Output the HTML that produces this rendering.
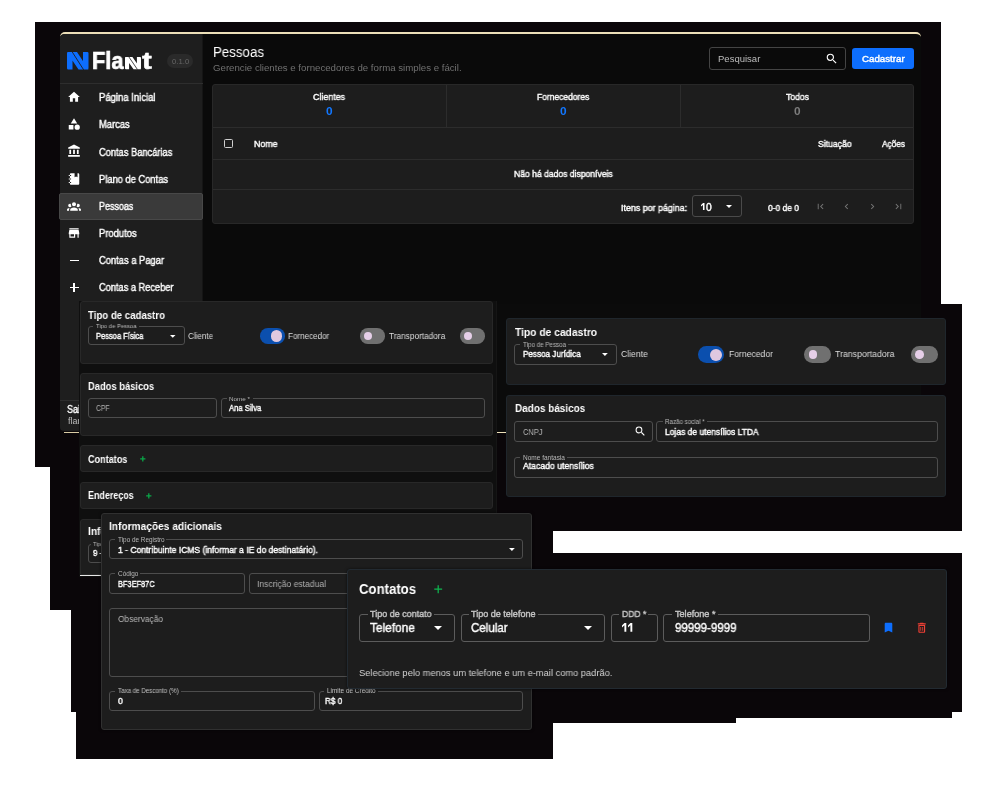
<!DOCTYPE html>
<html><head><meta charset="utf-8">
<style>
*{box-sizing:border-box;margin:0;padding:0}
html,body{width:1000px;height:800px;background:#fff;overflow:hidden}
body{font-family:"Liberation Sans",sans-serif;color:#fff;position:relative}
.t{position:absolute;white-space:nowrap;line-height:1;transform-origin:0 0;display:block;will-change:transform}
svg{position:absolute;overflow:visible}
</style></head><body>
<div style="position:absolute;left:35.1px;top:22.1px;width:905.7px;height:444.7px;background:#0a0609;"></div>
<div style="position:absolute;left:50.1px;top:460px;width:502.8px;height:149.7px;background:#0a0609;"></div>
<div style="position:absolute;left:71.1px;top:600px;width:481.8px;height:111.6px;background:#0a0609;"></div>
<div style="position:absolute;left:76.2px;top:700px;width:476.7px;height:58.8px;background:#0a0609;"></div>
<div style="position:absolute;left:500px;top:304px;width:462px;height:227px;background:#0a0609;"></div>
<div style="position:absolute;left:500px;top:520px;width:52.9px;height:40px;background:#0a0609;"></div>
<div style="position:absolute;left:550px;top:553.1px;width:412px;height:158.5px;background:#0a0609;"></div>
<div style="position:absolute;left:550px;top:700px;width:402px;height:17.7px;background:#0a0609;"></div>
<div style="position:absolute;left:550px;top:700px;width:186px;height:22.8px;background:#0a0609;"></div>
<div style="position:absolute;left:60px;top:31.9px;width:860.5px;height:399px;background:#0a0a0a;border-radius:5px 5px 0 4px;border-top:2.4px solid #ecdfb8;overflow:hidden">
<div style="position:absolute;left:0;top:0;width:143px;height:399px;background:#1e1e1e;border-right:1px solid #151515"></div>
</div>
<div style="position:absolute;left:64px;top:432px;width:854px;height:1.1px;background:#d9cba4;"></div>
<div style="position:absolute;left:60px;top:83.2px;width:143px;height:1px;background:#2e2e2e;"></div>
<div style="position:absolute;left:60px;top:399.5px;width:143px;height:1px;background:#2e2e2e;"></div>
<svg style="left:67px;top:52px" width="21.5" height="17.5" viewBox="0 0 215 175" preserveAspectRatio="none"><path d="M0 12Q0 0 12 0H55V175H12Q0 175 0 163ZM160 0H203Q215 0 215 12V163Q215 175 203 175H160ZM8 0H100L215 175H115L0 4Z" fill="#0d6efd"/><path d="M50 -4L167 179" stroke="#1e1e1e" stroke-width="9"/></svg>
<span class="t" style="left:92.00px;top:50.00px;font-size:23px;font-weight:700;color:#fff;-webkit-text-stroke:0.7px #fff;transform:scaleX(0.9478)">Fla</span>
<svg style="left:125px;top:57px" width="16" height="12.2" viewBox="0 0 215 175" preserveAspectRatio="none"><path d="M0 12Q0 0 12 0H55V175H12Q0 175 0 163ZM160 0H203Q215 0 215 12V163Q215 175 203 175H160ZM8 0H100L215 175H115L0 4Z" fill="#fff"/><path d="M50 -4L167 179" stroke="#1e1e1e" stroke-width="11"/></svg>
<span class="t" style="left:142.30px;top:50.00px;font-size:23px;font-weight:700;color:#fff;-webkit-text-stroke:0.5px #fff;transform:scaleX(1.2774)">t</span>
<div style="position:absolute;left:167px;top:54px;width:26.4px;height:14.4px;background:#2a2a2a;border-radius:7.2px;"></div>
<span class="t" style="left:171.60px;top:58.00px;font-size:7.5px;font-weight:400;color:#666;transform:scaleX(1.0307)">0.1.0</span>
<div style="position:absolute;left:59px;top:193px;width:144px;height:26.5px;background:#3a3a3a;border:1px solid #484848;border-radius:2px;"></div>
<span class="t" style="left:99.00px;top:93.00px;font-size:10px;font-weight:400;color:#fff;-webkit-text-stroke:0.4px #fff;transform:scaleX(0.9498)">Página Inicial</span>
<svg style="left:67px;top:90.1px" width="14" height="14" viewBox="0 0 24 24"><path d="M10 20v-6h4v6h5v-8h3L12 3 2 12h3v8z" fill="#fff"/></svg>
<span class="t" style="left:99.00px;top:120.00px;font-size:10px;font-weight:400;color:#fff;-webkit-text-stroke:0.4px #fff;transform:scaleX(0.9361)">Marcas</span>
<svg style="left:67px;top:117.24999999999999px" width="14" height="14" viewBox="0 0 24 24"><path d="M12 2l-5.5 9h11zM17.5 13a4.5 4.5 0 1 0 0 9 4.5 4.5 0 0 0 0-9zM3 21.5h8v-8H3z" fill="#fff"/></svg>
<span class="t" style="left:99.00px;top:148.00px;font-size:10px;font-weight:400;color:#fff;-webkit-text-stroke:0.4px #fff;transform:scaleX(0.9286)">Contas Bancárias</span>
<svg style="left:67px;top:144.4px" width="14" height="14" viewBox="0 0 24 24"><path d="M4 10h3v7H4zM10.5 10h3v7h-3zM2 19h20v3H2zM17 10h3v7h-3zM12 1L2 6v2h20V6z" fill="#fff"/></svg>
<span class="t" style="left:99.00px;top:175.00px;font-size:10px;font-weight:400;color:#fff;-webkit-text-stroke:0.4px #fff;transform:scaleX(0.9330)">Plano de Contas</span>
<svg style="left:67px;top:171.54999999999998px" width="14" height="14" viewBox="0 0 24 24"><path d="M3,7V5H5V4C5,2.89 5.9,2 7,2H13V9L15.5,7.5L18,9V2H19C20.05,2 21,2.95 21,4V20C21,21.05 20.05,22 19,22H7C5.95,22 5,21.05 5,20V19H3V17H5V13H3V11H5V7H3M7,11H5V13H7V11M7,7V5H5V7H7M7,19V17H5V19H7Z" fill="#fff"/></svg>
<span class="t" style="left:99.00px;top:202.00px;font-size:10px;font-weight:400;color:#fff;-webkit-text-stroke:0.4px #fff;transform:scaleX(0.8968)">Pessoas</span>
<svg style="left:67px;top:198.70000000000002px" width="14" height="14" viewBox="0 0 24 24"><path d="M12,5.5A3.5,3.5 0 0,1 15.5,9A3.5,3.5 0 0,1 12,12.5A3.5,3.5 0 0,1 8.5,9A3.5,3.5 0 0,1 12,5.5M5,8C5.56,8 6.08,8.15 6.53,8.42C6.38,9.85 6.8,11.27 7.66,12.38C7.16,13.34 6.16,14 5,14A3,3 0 0,1 2,11A3,3 0 0,1 5,8M19,8A3,3 0 0,1 22,11A3,3 0 0,1 19,14C17.84,14 16.84,13.34 16.34,12.38C17.2,11.27 17.62,9.85 17.47,8.42C17.92,8.15 18.44,8 19,8M5.5,18.25C5.5,16.18 8.41,14.5 12,14.5C15.59,14.5 18.5,16.18 18.5,18.25V20H5.5V18.25M0,20V18.5C0,17.11 1.89,15.94 4.45,15.6C3.86,16.28 3.5,17.22 3.5,18.25V20H0M24,20H20.5V18.25C20.5,17.22 20.14,16.28 19.55,15.6C22.11,15.94 24,17.11 24,18.5V20Z" fill="#fff"/></svg>
<span class="t" style="left:99.00px;top:229.00px;font-size:10px;font-weight:400;color:#fff;-webkit-text-stroke:0.4px #fff;transform:scaleX(0.9418)">Produtos</span>
<svg style="left:67px;top:225.85px" width="14" height="14" viewBox="0 0 24 24"><path d="M20 4H4v2h16V4zm1 10v-2l-1-5H4l-1 5v2h1v6h10v-6h4v6h2v-6h1zm-9 4H6v-4h6v4z" fill="#fff"/></svg>
<span class="t" style="left:99.00px;top:256.00px;font-size:10px;font-weight:400;color:#fff;-webkit-text-stroke:0.4px #fff;transform:scaleX(0.9353)">Contas a Pagar</span>
<div style="position:absolute;left:69.5px;top:259.5px;width:9px;height:1.4px;background:#fff;"></div>
<span class="t" style="left:99.00px;top:283.00px;font-size:10px;font-weight:400;color:#fff;-webkit-text-stroke:0.4px #fff;transform:scaleX(0.9242)">Contas a Receber</span>
<div style="position:absolute;left:69.5px;top:286.65000000000003px;width:9px;height:1.4px;background:#fff;"></div>
<div style="position:absolute;left:73.3px;top:282.85px;width:1.4px;height:9px;background:#fff;"></div>
<span class="t" style="left:67.00px;top:405.00px;font-size:10px;font-weight:400;color:#fff;-webkit-text-stroke:0.4px #fff;transform:scaleX(0.8990)">Sair</span>
<span class="t" style="left:67.50px;top:417.00px;font-size:9px;font-weight:400;color:#bbb;transform:scaleX(0.9893)">flant@flant.com</span>
<span class="t" style="left:212.60px;top:45.00px;font-size:14px;font-weight:400;color:#fff;transform:scaleX(0.9497)">Pessoas</span>
<span class="t" style="left:212.60px;top:63.00px;font-size:9.6px;font-weight:400;color:#707070;transform:scaleX(1.0069)">Gerencie clientes e fornecedores de forma simples e fácil.</span>
<div style="position:absolute;left:709px;top:46.8px;width:136.6px;height:23.4px;border:1px solid #444;border-radius:3px;"></div>
<span class="t" style="left:718.00px;top:54.00px;font-size:9.5px;font-weight:400;color:#bdbdbd;transform:scaleX(1.0012)">Pesquisar</span>
<svg style="left:824.5px;top:52.3px" width="13.5" height="13.5" viewBox="0 0 24 24"><path d="M15.5 14h-.79l-.28-.27A6.471 6.471 0 0 0 16 9.5 6.5 6.5 0 1 0 9.5 16c1.61 0 3.09-.59 4.23-1.57l.27.28v.79l5 4.99L20.49 19l-4.99-5zm-6 0C7.01 14 5 11.99 5 9.5S7.01 5 9.5 5 14 7.01 14 9.5 11.99 14 9.5 14z" fill="#fff"/></svg>
<div style="position:absolute;left:852.3px;top:48.4px;width:61.9px;height:20.2px;background:#0d6efd;border-radius:3px;"></div>
<span class="t" style="left:861.60px;top:55.00px;font-size:9px;font-weight:400;color:#fff;-webkit-text-stroke:0.4px #fff;transform:scaleX(1.0806)">Cadastrar</span>
<div style="position:absolute;left:212px;top:83.8px;width:702px;height:140.0px;background:#1d1d1d;border:1px solid #282828;border-radius:3px;"></div>
<div style="position:absolute;left:213px;top:127px;width:700px;height:1px;background:#2c2c2c;"></div>
<div style="position:absolute;left:213px;top:158.8px;width:700px;height:1px;background:#2c2c2c;"></div>
<div style="position:absolute;left:213px;top:188.5px;width:700px;height:1px;background:#2c2c2c;"></div>
<div style="position:absolute;left:446px;top:84.8px;width:1px;height:42.2px;background:#2c2c2c;"></div>
<div style="position:absolute;left:680px;top:84.8px;width:1px;height:42.2px;background:#2c2c2c;"></div>
<span class="t" style="left:313.00px;top:93.00px;font-size:9px;font-weight:400;color:#fff;-webkit-text-stroke:0.4px #fff;transform:scaleX(0.9841)">Clientes</span>
<span class="t" style="left:325.70px;top:106.00px;font-size:11px;font-weight:700;color:#1277ff;transform:scaleX(1.0776)">0</span>
<span class="t" style="left:536.85px;top:93.00px;font-size:9px;font-weight:400;color:#fff;-webkit-text-stroke:0.4px #fff;transform:scaleX(0.9418)">Fornecedores</span>
<span class="t" style="left:559.70px;top:106.00px;font-size:11px;font-weight:700;color:#1277ff;transform:scaleX(1.0776)">0</span>
<span class="t" style="left:785.50px;top:93.00px;font-size:9px;font-weight:400;color:#fff;-webkit-text-stroke:0.4px #fff;transform:scaleX(0.9571)">Todos</span>
<span class="t" style="left:793.70px;top:106.00px;font-size:11px;font-weight:700;color:#7c7c7c;transform:scaleX(1.0776)">0</span>
<div style="position:absolute;left:223.8px;top:138.6px;width:9.2px;height:9.2px;border:1.2px solid #d0d0d0;border-radius:1.5px;"></div>
<span class="t" style="left:253.80px;top:140.00px;font-size:9px;font-weight:400;color:#fff;-webkit-text-stroke:0.4px #fff;transform:scaleX(0.9785)">Nome</span>
<span class="t" style="left:817.80px;top:140.00px;font-size:9px;font-weight:400;color:#fff;-webkit-text-stroke:0.4px #fff;transform:scaleX(0.9591)">Situação</span>
<span class="t" style="left:881.70px;top:140.00px;font-size:9px;font-weight:400;color:#fff;-webkit-text-stroke:0.4px #fff;transform:scaleX(0.9194)">Ações</span>
<span class="t" style="left:513.60px;top:170.00px;font-size:9px;font-weight:400;color:#fff;-webkit-text-stroke:0.4px #fff;transform:scaleX(0.9539)">Não há dados disponíveis</span>
<span class="t" style="left:620.80px;top:204.00px;font-size:9px;font-weight:400;color:#fff;-webkit-text-stroke:0.4px #fff;transform:scaleX(0.9871)">Itens por página:</span>
<div style="position:absolute;left:691.8px;top:195px;width:50.6px;height:22.4px;border:1px solid #4a4a4a;border-radius:3px;"></div>
<svg style="left:701px;top:203.4px" width="3.5" height="7.1" viewBox="0 0 10 20" preserveAspectRatio="none"><path d="M0 5.600L5.800 0H10V20H5.600V5.400L0 10.200Z" fill="#fff"/></svg>
<span class="t" style="left:706.00px;top:203.00px;font-size:10px;font-weight:400;color:#fff;-webkit-text-stroke:0.4px #fff;transform:scaleX(1.0247)">0</span>
<svg style="left:726.0px;top:205.3px" width="6" height="3.0" viewBox="0 0 10 5"><path d="M0 0h10L5 5z" fill="#fff"/></svg>
<span class="t" style="left:768.00px;top:204.00px;font-size:9px;font-weight:400;color:#fff;-webkit-text-stroke:0.4px #fff;transform:scaleX(0.9385)">0-0 de 0</span>
<svg style="left:815.3px;top:201.2px" width="11" height="11" viewBox="0 0 24 24"><path d="M18.41 16.59L13.82 12l4.59-4.59L17 6l-6 6 6 6zM6 6h2v12H6z" fill="#777"/></svg>
<svg style="left:840.9px;top:201.2px" width="11" height="11" viewBox="0 0 24 24"><path d="M15.41 7.41L14 6l-6 6 6 6 1.41-1.41L10.830 12z" fill="#777"/></svg>
<svg style="left:866.8px;top:201.2px" width="11" height="11" viewBox="0 0 24 24"><path d="M10 6L8.590 7.410 13.170 12l-4.580 4.590L10 18l6-6z" fill="#777"/></svg>
<svg style="left:892.7px;top:201.2px" width="11" height="11" viewBox="0 0 24 24"><path d="M5.59 7.41L10.18 12l-4.59 4.59L7 18l6-6-6-6zM16 6h2v12h-2z" fill="#777"/></svg>
<div style="position:absolute;left:79px;top:301px;width:417px;height:275.5px;background:#0f0f0f;"></div>
<div style="position:absolute;left:495.5px;top:301px;width:1.2px;height:212px;background:#151515;"></div>
<div style="position:absolute;left:80px;top:301.3px;width:412.8px;height:62.5px;background:#1d1d1d;border:1px solid #282828;border-radius:3px;"></div>
<span class="t" style="left:88.00px;top:310.00px;font-size:10.5px;font-weight:700;color:#fff;transform:scaleX(0.9185)">Tipo de cadastro</span>
<div style="position:absolute;left:87.8px;top:326px;width:96.8px;height:19.4px;border:1px solid #4d4d4d;border-radius:3px;"></div>
<div style="position:absolute;left:93.2px;top:324.3px;width:45.5px;height:4px;background:#1d1d1d;"></div>
<span class="t" style="left:95.70px;top:323.00px;font-size:6px;font-weight:400;color:#b9b9b9;transform:scaleX(0.9763)">Tipo de Pessoa</span>
<span class="t" style="left:95.70px;top:332.00px;font-size:8.6px;font-weight:400;color:#fff;-webkit-text-stroke:0.4px #fff;transform:scaleX(0.8762)">Pessoa Física</span>
<svg style="left:169.65px;top:335.025px" width="5.5" height="2.75" viewBox="0 0 10 5"><path d="M0 0h10L5 5z" fill="#fff"/></svg>
<span class="t" style="left:188.00px;top:332.00px;font-size:8.6px;font-weight:400;color:#dedede;transform:scaleX(0.9415)">Cliente</span>
<div style="position:absolute;left:259.5px;top:328.3px;width:25.0px;height:15.699999999999989px;background:#0b4fae;border-radius:7.849999999999994px;"></div>
<div style="position:absolute;left:270.99800000000005px;top:330.498px;width:11.303999999999991px;height:11.303999999999991px;background:#dfc8e0;border-radius:50%;"></div>
<span class="t" style="left:288.30px;top:332.00px;font-size:8.6px;font-weight:400;color:#dedede;transform:scaleX(0.9374)">Fornecedor</span>
<div style="position:absolute;left:359.9px;top:328.3px;width:24.80000000000001px;height:15.699999999999989px;background:#707070;border-radius:7.849999999999994px;"></div>
<div style="position:absolute;left:364.16799999999995px;top:332.068px;width:8.163999999999994px;height:8.163999999999994px;background:#e6cfe8;border-radius:50%;"></div>
<span class="t" style="left:388.50px;top:332.00px;font-size:8.6px;font-weight:400;color:#dedede;transform:scaleX(0.9617)">Transportadora</span>
<div style="position:absolute;left:459.6px;top:328.3px;width:25.19999999999999px;height:15.699999999999989px;background:#707070;border-radius:7.849999999999994px;"></div>
<div style="position:absolute;left:463.868px;top:332.068px;width:8.163999999999994px;height:8.163999999999994px;background:#e6cfe8;border-radius:50%;"></div>
<div style="position:absolute;left:80px;top:373.4px;width:412.8px;height:62.2px;background:#1d1d1d;border:1px solid #282828;border-radius:3px;"></div>
<span class="t" style="left:88.00px;top:381.00px;font-size:10.5px;font-weight:700;color:#fff;transform:scaleX(0.8931)">Dados básicos</span>
<div style="position:absolute;left:87.8px;top:398.2px;width:129.6px;height:19.6px;border:1px solid #4d4d4d;border-radius:3px;"></div>
<span class="t" style="left:95.70px;top:404.00px;font-size:8.6px;font-weight:400;color:#b4b4b4;transform:scaleX(0.7855)">CPF</span>
<div style="position:absolute;left:221.3px;top:398.2px;width:263.5px;height:19.6px;border:1px solid #4d4d4d;border-radius:3px;"></div>
<div style="position:absolute;left:226.5px;top:396.5px;width:26px;height:4px;background:#1d1d1d;"></div>
<span class="t" style="left:229.00px;top:396.00px;font-size:6px;font-weight:400;color:#b9b9b9;transform:scaleX(1.0492)">Nome *</span>
<span class="t" style="left:229.00px;top:404.00px;font-size:8.6px;font-weight:400;color:#fff;-webkit-text-stroke:0.4px #fff;transform:scaleX(0.8895)">Ana Silva</span>
<div style="position:absolute;left:80px;top:445.1px;width:412.8px;height:27.2px;background:#1d1d1d;border:1px solid #282828;border-radius:3px;"></div>
<span class="t" style="left:87.80px;top:455.00px;font-size:10px;font-weight:700;color:#fff;transform:scaleX(0.9090)">Contatos</span>
<svg style="left:139.7px;top:455.8px" width="5.6" height="5.6" viewBox="0 0 10 10"><path d="M5 0.3V9.7M0.3 5H9.7" stroke="#0aa648" stroke-width="2.3214285714285716" fill="none"/></svg>
<div style="position:absolute;left:80px;top:482.3px;width:412.8px;height:27.2px;background:#1d1d1d;border:1px solid #282828;border-radius:3px;"></div>
<span class="t" style="left:87.80px;top:491.00px;font-size:10px;font-weight:700;color:#fff;transform:scaleX(0.8936)">Endereços</span>
<svg style="left:146.0px;top:492.59999999999997px" width="5.6" height="5.6" viewBox="0 0 10 10"><path d="M5 0.3V9.7M0.3 5H9.7" stroke="#0aa648" stroke-width="2.3214285714285716" fill="none"/></svg>
<div style="position:absolute;left:80px;top:519.4px;width:412.8px;height:55.8px;background:#1d1d1d;border:1px solid #282828;border-radius:3px;border-radius:3px 3px 0 0;"></div>
<div style="position:absolute;left:80px;top:575px;width:21px;height:1.2px;background:#e8e8e8;"></div>
<span class="t" style="left:87.80px;top:526.00px;font-size:10.5px;font-weight:700;color:#fff;transform:scaleX(0.9681)">Informações adicionais</span>
<div style="position:absolute;left:87.8px;top:543.5px;width:397.0px;height:19.5px;border:1px solid #4d4d4d;border-radius:3px;"></div>
<div style="position:absolute;left:90.5px;top:541.7px;width:45px;height:4px;background:#1d1d1d;"></div>
<span class="t" style="left:93.00px;top:541.00px;font-size:6px;font-weight:400;color:#b9b9b9;transform:scaleX(0.9130)">Tipo de Registro</span>
<span class="t" style="left:93.00px;top:549.00px;font-size:8.6px;font-weight:400;color:#fff;-webkit-text-stroke:0.4px #fff;transform:scaleX(0.9100)">9 - Não Contribuinte</span>
<div style="position:absolute;left:497px;top:304px;width:465px;height:227px;background:#0a0609;"></div>
<div style="position:absolute;left:497px;top:304px;width:424px;height:128.5px;background:#0b0b0b;"></div>
<div style="position:absolute;left:497px;top:432px;width:9px;height:1.1px;background:#ecdfb8;"></div>
<div style="position:absolute;left:506px;top:318.2px;width:440.3px;height:66.4px;background:#1d1d1d;border:1px solid #282828;border-radius:3px;border-color:#1f262c;"></div>
<span class="t" style="left:514.70px;top:327.00px;font-size:11.2px;font-weight:700;color:#fff;transform:scaleX(0.9180)">Tipo de cadastro</span>
<div style="position:absolute;left:514.3px;top:344.2px;width:102.8px;height:20.6px;border:1px solid #4d4d4d;border-radius:3px;"></div>
<div style="position:absolute;left:520.1px;top:342.7px;width:48.2px;height:4px;background:#1d1d1d;"></div>
<span class="t" style="left:522.60px;top:342.00px;font-size:6.4px;font-weight:400;color:#b9b9b9;transform:scaleX(0.9780)">Tipo de Pessoa</span>
<span class="t" style="left:522.60px;top:350.00px;font-size:9.1px;font-weight:400;color:#fff;-webkit-text-stroke:0.4px #fff;transform:scaleX(0.8918)">Pessoa Jurídica</span>
<svg style="left:602.1px;top:353.15000000000003px" width="5.8" height="2.9" viewBox="0 0 10 5"><path d="M0 0h10L5 5z" fill="#fff"/></svg>
<span class="t" style="left:621.20px;top:350.00px;font-size:9.1px;font-weight:400;color:#dedede;transform:scaleX(0.9466)">Cliente</span>
<div style="position:absolute;left:697.7px;top:346.4px;width:26.5px;height:16.600000000000023px;background:#0b4fae;border-radius:8.300000000000011px;"></div>
<div style="position:absolute;left:709.9240000000001px;top:348.724px;width:11.952000000000016px;height:11.952000000000016px;background:#dfc8e0;border-radius:50%;"></div>
<span class="t" style="left:728.50px;top:350.00px;font-size:9.1px;font-weight:400;color:#dedede;transform:scaleX(0.9459)">Fornecedor</span>
<div style="position:absolute;left:804.2px;top:346.4px;width:26.59999999999991px;height:16.600000000000023px;background:#707070;border-radius:8.300000000000011px;"></div>
<div style="position:absolute;left:808.6840000000001px;top:350.38399999999996px;width:8.632000000000012px;height:8.632000000000012px;background:#e6cfe8;border-radius:50%;"></div>
<span class="t" style="left:835.00px;top:350.00px;font-size:9.1px;font-weight:400;color:#dedede;transform:scaleX(0.9621)">Transportadora</span>
<div style="position:absolute;left:911px;top:346.4px;width:26.600000000000023px;height:16.600000000000023px;background:#707070;border-radius:8.300000000000011px;"></div>
<div style="position:absolute;left:915.484px;top:350.38399999999996px;width:8.632000000000012px;height:8.632000000000012px;background:#e6cfe8;border-radius:50%;"></div>
<div style="position:absolute;left:506px;top:394.6px;width:440.3px;height:102.4px;background:#1d1d1d;border:1px solid #282828;border-radius:3px;border-color:#1f262c;"></div>
<span class="t" style="left:514.70px;top:403.00px;font-size:11.2px;font-weight:700;color:#fff;transform:scaleX(0.8890)">Dados básicos</span>
<div style="position:absolute;left:514.3px;top:421.2px;width:138.7px;height:20.4px;border:1px solid #4d4d4d;border-radius:3px;"></div>
<span class="t" style="left:522.60px;top:428.00px;font-size:9.1px;font-weight:400;color:#b4b4b4;transform:scaleX(0.8168)">CNPJ</span>
<svg style="left:634px;top:425.3px" width="12.6" height="12.6" viewBox="0 0 24 24"><path d="M15.5 14h-.79l-.28-.27A6.471 6.471 0 0 0 16 9.5 6.5 6.5 0 1 0 9.5 16c1.61 0 3.09-.59 4.23-1.57l.27.28v.79l5 4.99L20.49 19l-4.99-5zm-6 0C7.01 14 5 11.99 5 9.5S7.01 5 9.5 5 14 7.01 14 9.5 11.99 14 9.5 14z" fill="#fff"/></svg>
<div style="position:absolute;left:656.3px;top:421.2px;width:281.3px;height:20.4px;border:1px solid #4d4d4d;border-radius:3px;"></div>
<div style="position:absolute;left:662.5px;top:419.4px;width:44.7px;height:4px;background:#1d1d1d;"></div>
<span class="t" style="left:665.00px;top:419.00px;font-size:6.4px;font-weight:400;color:#b9b9b9;transform:scaleX(0.9716)">Razão social *</span>
<span class="t" style="left:665.00px;top:428.00px;font-size:9.1px;font-weight:400;color:#fff;-webkit-text-stroke:0.4px #fff;transform:scaleX(0.9331)">Lojas de utensílios LTDA</span>
<div style="position:absolute;left:514.3px;top:457.3px;width:423.3px;height:20.3px;border:1px solid #4d4d4d;border-radius:3px;"></div>
<div style="position:absolute;left:520.1px;top:455.5px;width:47px;height:4px;background:#1d1d1d;"></div>
<span class="t" style="left:522.60px;top:455.00px;font-size:6.4px;font-weight:400;color:#b9b9b9;transform:scaleX(1.0190)">Nome fantasia</span>
<span class="t" style="left:522.60px;top:462.00px;font-size:9.1px;font-weight:400;color:#fff;-webkit-text-stroke:0.4px #fff;transform:scaleX(0.9525)">Atacado utensílios</span>
<div style="position:absolute;left:101px;top:513px;width:431.3px;height:217.2px;background:#1d1d1d;border:1px solid #282828;border-radius:3px;border-color:#303030;box-shadow:0 0 3px rgba(0,0,0,.6);"></div>
<span class="t" style="left:109.40px;top:521.00px;font-size:11.2px;font-weight:700;color:#fff;transform:scaleX(0.9087)">Informações adicionais</span>
<div style="position:absolute;left:109.2px;top:539.1px;width:414.1px;height:20.2px;border:1px solid #4d4d4d;border-radius:3px;"></div>
<div style="position:absolute;left:115.1px;top:537.4px;width:51.2px;height:4px;background:#1d1d1d;"></div>
<span class="t" style="left:117.60px;top:537.00px;font-size:6.4px;font-weight:400;color:#b9b9b9;transform:scaleX(0.9902)">Tipo de Registro</span>
<span class="t" style="left:117.60px;top:546.00px;font-size:9.1px;font-weight:400;color:#fff;-webkit-text-stroke:0.4px #fff;transform:scaleX(0.9399)">1 - Contribuinte ICMS (informar a IE do destinatário).</span>
<svg style="left:509.1px;top:548.05px" width="5.8" height="2.9" viewBox="0 0 10 5"><path d="M0 0h10L5 5z" fill="#fff"/></svg>
<div style="position:absolute;left:109.2px;top:573.25px;width:135.8px;height:20.5px;border:1px solid #4d4d4d;border-radius:3px;"></div>
<div style="position:absolute;left:115.1px;top:571.7px;width:25.4px;height:4px;background:#1d1d1d;"></div>
<span class="t" style="left:117.60px;top:571.00px;font-size:6.4px;font-weight:400;color:#b9b9b9;transform:scaleX(1.0066)">Código</span>
<span class="t" style="left:117.60px;top:580.00px;font-size:9.1px;font-weight:400;color:#fff;-webkit-text-stroke:0.4px #fff;transform:scaleX(0.8136)">BF3EF87C</span>
<div style="position:absolute;left:249px;top:573.25px;width:274.3px;height:20.5px;border:1px solid #4d4d4d;border-radius:3px;"></div>
<span class="t" style="left:257.00px;top:580.00px;font-size:9.1px;font-weight:400;color:#b0b0b0;transform:scaleX(0.9414)">Inscrição estadual</span>
<div style="position:absolute;left:109.2px;top:608.25px;width:414.1px;height:68.5px;border:1px solid #4d4d4d;border-radius:3px;"></div>
<span class="t" style="left:117.60px;top:615.00px;font-size:9.1px;font-weight:400;color:#b8b8b8;transform:scaleX(0.9178)">Observação</span>
<div style="position:absolute;left:109.2px;top:690.75px;width:205.8px;height:20.5px;border:1px solid #4d4d4d;border-radius:3px;"></div>
<div style="position:absolute;left:115.1px;top:689px;width:65.6px;height:4px;background:#1d1d1d;"></div>
<span class="t" style="left:117.60px;top:688.00px;font-size:6.4px;font-weight:400;color:#c0c0c0;transform:scaleX(0.9638)">Taxa de Desconto (%)</span>
<span class="t" style="left:117.60px;top:697.00px;font-size:9.1px;font-weight:400;color:#fff;-webkit-text-stroke:0.4px #fff;transform:scaleX(0.9481)">0</span>
<div style="position:absolute;left:318.5px;top:690.75px;width:204.8px;height:20.5px;border:1px solid #4d4d4d;border-radius:3px;"></div>
<div style="position:absolute;left:324.1px;top:689px;width:53.6px;height:4px;background:#1d1d1d;"></div>
<span class="t" style="left:326.60px;top:688.00px;font-size:6.4px;font-weight:400;color:#c0c0c0;transform:scaleX(1.0060)">Limite de Crédito</span>
<span class="t" style="left:324.60px;top:697.00px;font-size:9.1px;font-weight:400;color:#fff;-webkit-text-stroke:0.4px #fff;transform:scaleX(0.8950)">R$ 0</span>
<div style="position:absolute;left:346.6px;top:568.8px;width:600.8px;height:120.4px;background:#1d1d1d;border:1px solid #282828;border-radius:3px;border-color:#222a31;box-shadow:0 0 3px rgba(0,0,0,.6);"></div>
<span class="t" style="left:359.00px;top:582.00px;font-size:14px;font-weight:700;color:#fff;transform:scaleX(0.9395)">Contatos</span>
<svg style="left:434.2px;top:584.8px" width="8.4" height="8.4" viewBox="0 0 10 10"><path d="M5 0.3V9.7M0.3 5H9.7" stroke="#0fb54f" stroke-width="1.4880952380952381" fill="none"/></svg>
<div style="position:absolute;left:359px;top:614px;width:96px;height:27.8px;border:1px solid #5c5c5c;border-radius:3px;"></div>
<div style="position:absolute;left:367.5px;top:612.2px;width:66.5px;height:4px;background:#1d1d1d;"></div>
<span class="t" style="left:370.00px;top:610.00px;font-size:9px;font-weight:400;color:#c4c4c4;-webkit-text-stroke:0.4px #c4c4c4;transform:scaleX(0.9965)">Tipo de contato</span>
<span class="t" style="left:370.00px;top:622.00px;font-size:12.6px;font-weight:400;color:#fff;-webkit-text-stroke:0.4px #fff;transform:scaleX(0.9449)">Telefone</span>
<svg style="left:434.0px;top:626.2px" width="8" height="4.0" viewBox="0 0 10 5"><path d="M0 0h10L5 5z" fill="#fff"/></svg>
<div style="position:absolute;left:460.6px;top:614px;width:144.4px;height:27.8px;border:1px solid #5c5c5c;border-radius:3px;"></div>
<div style="position:absolute;left:468.9px;top:612.2px;width:69.5px;height:4px;background:#1d1d1d;"></div>
<span class="t" style="left:471.40px;top:610.00px;font-size:9px;font-weight:400;color:#c4c4c4;-webkit-text-stroke:0.4px #c4c4c4;transform:scaleX(1.0044)">Tipo de telefone</span>
<span class="t" style="left:471.40px;top:622.00px;font-size:12.6px;font-weight:400;color:#fff;-webkit-text-stroke:0.4px #fff;transform:scaleX(0.9171)">Celular</span>
<svg style="left:583.8px;top:626.2px" width="8" height="4.0" viewBox="0 0 10 5"><path d="M0 0h10L5 5z" fill="#fff"/></svg>
<div style="position:absolute;left:610.6px;top:614px;width:47.4px;height:27.8px;border:1px solid #5c5c5c;border-radius:3px;"></div>
<div style="position:absolute;left:619.2px;top:612.2px;width:29.3px;height:4px;background:#1d1d1d;"></div>
<span class="t" style="left:621.70px;top:610.00px;font-size:9px;font-weight:400;color:#c4c4c4;-webkit-text-stroke:0.4px #c4c4c4;transform:scaleX(0.9524)">DDD *</span>
<svg style="left:622px;top:623.3px" width="4.3" height="8.7" viewBox="0 0 10 20" preserveAspectRatio="none"><path d="M0 5.600L5.800 0H10V20H5.600V5.400L0 10.200Z" fill="#fff"/></svg>
<svg style="left:628.3px;top:623.3px" width="4.3" height="8.7" viewBox="0 0 10 20" preserveAspectRatio="none"><path d="M0 5.600L5.800 0H10V20H5.600V5.400L0 10.200Z" fill="#fff"/></svg>
<div style="position:absolute;left:663.3px;top:614px;width:206.3px;height:27.8px;border:1px solid #5c5c5c;border-radius:3px;"></div>
<div style="position:absolute;left:672.0px;top:612.2px;width:45.5px;height:4px;background:#1d1d1d;"></div>
<span class="t" style="left:674.50px;top:610.00px;font-size:9px;font-weight:400;color:#c4c4c4;-webkit-text-stroke:0.4px #c4c4c4;transform:scaleX(1.0117)">Telefone *</span>
<span class="t" style="left:674.50px;top:622.00px;font-size:12.6px;font-weight:400;color:#fff;-webkit-text-stroke:0.4px #fff;transform:scaleX(0.9147)">99999-9999</span>
<svg style="left:882.2px;top:620.8px" width="13" height="13" viewBox="0 0 24 24"><path d="M17 3H7c-1.1 0-2 .9-2 2v16l7-3 7 3V5c0-1.1-.9-2-2-2z" fill="#0d6efd"/></svg>
<svg style="left:915.3px;top:620.8px" width="13.5" height="13.5" viewBox="0 0 24 24"><path d="M16 9v10H8V9h8m-1.5-6h-5l-1 1H5v2h14V4h-3.500l-1-1zM18 7H6v12c0 1.100.9 2 2 2h8c1.100 0 2-.9 2-2V7zM9.500 10.500h1.500v7H9.500zM13 10.500h1.500v7H13z" fill="#ee3f35"/></svg>
<span class="t" style="left:359.00px;top:668.00px;font-size:9.5px;font-weight:400;color:#d4d4d4;transform:scaleX(0.9793)">Selecione pelo menos um telefone e um e-mail como padrão.</span>
</body></html>
